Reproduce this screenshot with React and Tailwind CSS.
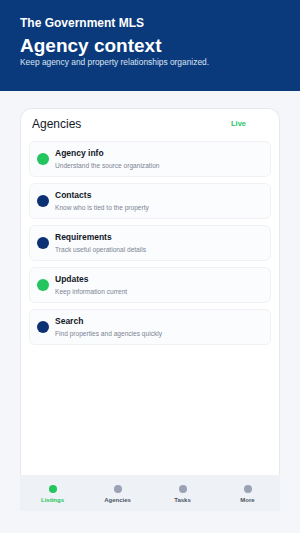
import React from 'react';

const items = [
  { title: 'Agency info', sub: 'Understand the source organization', live: true },
  { title: 'Contacts', sub: 'Know who is tied to the property', live: false },
  { title: 'Requirements', sub: 'Track useful operational details', live: false },
  { title: 'Updates', sub: 'Keep information current', live: true },
  { title: 'Search', sub: 'Find properties and agencies quickly', live: false },
];

const tabs = ['Listings', 'Agencies', 'Tasks', 'More'];

export default function App() {
  return (
    <div className="w-[300px] h-[533px] bg-[#f4f6fa] flex flex-col" style={{ fontFamily: '"Liberation Sans", Arial, sans-serif' }}>
      {/* Header */}
      <div className="bg-[#0a3a7c] h-[91px] px-5 pt-[15px] text-white shrink-0">
        <div className="text-[12px] font-bold leading-[16px]">The Government MLS</div>
        <div className="text-[19px] font-bold leading-[22px] mt-[4px]">Agency context</div>
        <div className="text-[8.4px] leading-[11px] text-[#dbe4f2]">Keep agency and property relationships organized.</div>
      </div>

      {/* Card */}
      <div className="mx-5 mt-[17px] flex flex-col h-[403px]">
        <div className="flex-1 bg-white border border-[#e6e9ef] border-b-0 rounded-t-[12px] px-[8px]">
          <div className="flex items-center justify-between pl-[3px] pr-[25px] h-[32px] pb-[3px]">
            <span className="text-[12px] text-[#111827] leading-[16px]">Agencies</span>
            <span className="text-[7.5px] font-bold text-[#22c55e]">Live</span>
          </div>
          <div className="flex flex-col gap-[6px]">
            {items.map((it) => (
              <div key={it.title} className="h-[36px] bg-[#fbfcfd] border border-[#eff1f5] rounded-[6px] flex items-center px-[7px] gap-[6px]">
                <span className={`w-[12px] h-[12px] rounded-full shrink-0 ${it.live ? 'bg-[#22c55e]' : 'bg-[#0b3172]'}`} />
                <div className="flex flex-col">
                  <span className="text-[8.5px] font-bold text-[#111827] leading-[11px]">{it.title}</span>
                  <span className="text-[6.6px] text-[#7b8494] leading-[9px] mt-[2px]">{it.sub}</span>
                </div>
              </div>
            ))}
          </div>
        </div>
        <div className="h-[36px] bg-[#eef1f6] grid grid-cols-4 shrink-0">
          {tabs.map((t, i) => (
            <div key={t} className="flex flex-col items-center pt-[10px]">
              <span className={`w-[8px] h-[8px] rounded-full ${i === 0 ? 'bg-[#22c55e]' : 'bg-[#9aa2b4]'}`} />
              <span className={`text-[6px] font-bold mt-[3px] leading-[8px] ${i === 0 ? 'text-[#22c55e]' : 'text-[#4b5563]'}`}>{t}</span>
            </div>
          ))}
        </div>
      </div>
    </div>
  );
}
